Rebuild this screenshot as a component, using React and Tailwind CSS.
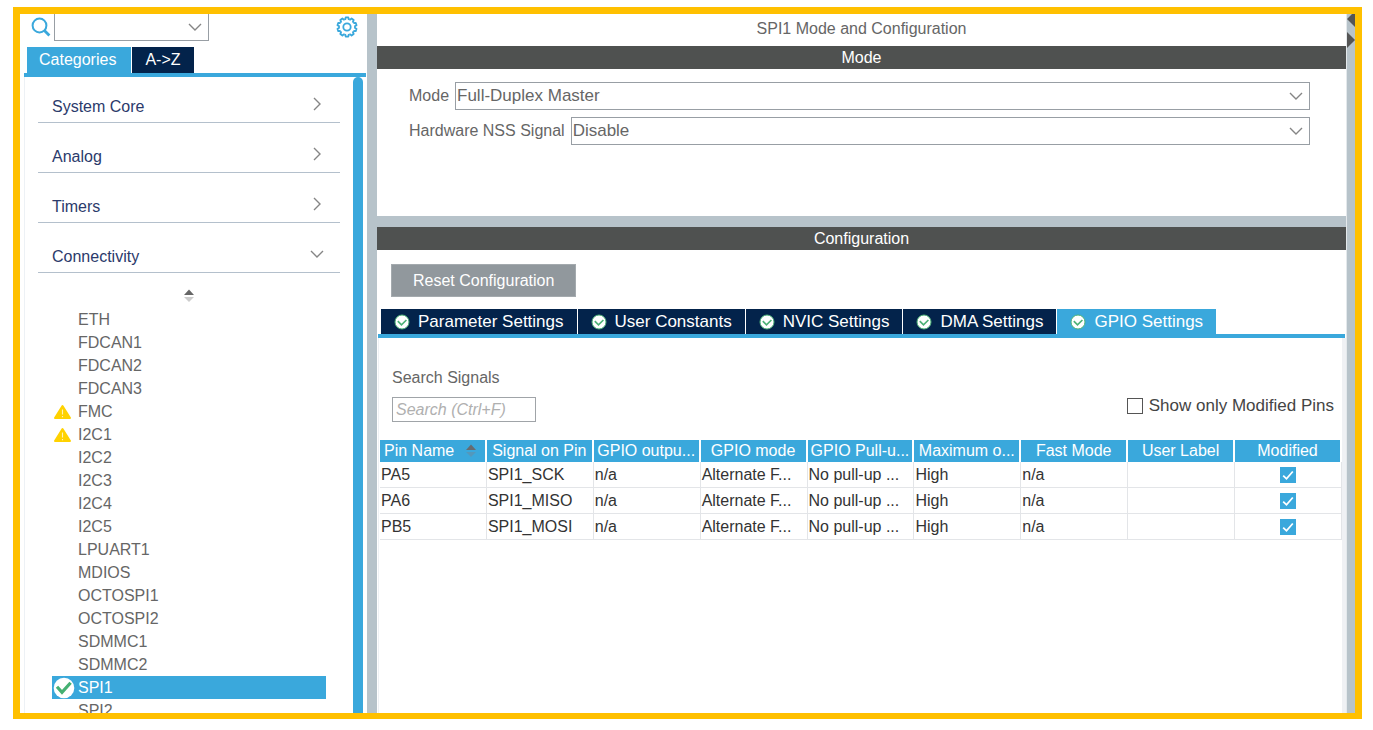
import { useState } from 'react'

const categories = [
  { name: 'System Core', open: false },
  { name: 'Analog', open: false },
  { name: 'Timers', open: false },
  { name: 'Connectivity', open: true },
]

const peripherals = [
  { name: 'ETH' },
  { name: 'FDCAN1' },
  { name: 'FDCAN2' },
  { name: 'FDCAN3' },
  { name: 'FMC', status: 'warning' },
  { name: 'I2C1', status: 'warning' },
  { name: 'I2C2' },
  { name: 'I2C3' },
  { name: 'I2C4' },
  { name: 'I2C5' },
  { name: 'LPUART1' },
  { name: 'MDIOS' },
  { name: 'OCTOSPI1' },
  { name: 'OCTOSPI2' },
  { name: 'SDMMC1' },
  { name: 'SDMMC2' },
  { name: 'SPI1', status: 'ok' },
  { name: 'SPI2' },
]

const settingTabs = [
  'Parameter Settings',
  'User Constants',
  'NVIC Settings',
  'DMA Settings',
  'GPIO Settings',
]

const columns = [
  'Pin Name',
  'Signal on Pin',
  'GPIO outpu...',
  'GPIO mode',
  'GPIO Pull-u...',
  'Maximum o...',
  'Fast Mode',
  'User Label',
  'Modified',
]

const pins = [
  ['PA5', 'SPI1_SCK', 'n/a', 'Alternate F...', 'No pull-up ...', 'High', 'n/a', ''],
  ['PA6', 'SPI1_MISO', 'n/a', 'Alternate F...', 'No pull-up ...', 'High', 'n/a', ''],
  ['PB5', 'SPI1_MOSI', 'n/a', 'Alternate F...', 'No pull-up ...', 'High', 'n/a', ''],
]

function Chevron({ className = '' }) {
  return (
    <svg
      viewBox="0 0 14 14"
      className={`h-[14px] w-[14px] ${className}`}
      fill="none"
      stroke="#858585"
      strokeWidth="1.4"
      aria-hidden="true"
    >
      <path d="M1 4l6 6 6-6" />
    </svg>
  )
}

function SearchIcon() {
  return (
    <svg viewBox="0 0 20 20" className="h-5 w-5" fill="none" stroke="#3AA8DC" aria-hidden="true">
      <circle cx="8.5" cy="8.5" r="6.9" strokeWidth="2" />
      <path d="M13.4 13.4l5 5" strokeWidth="2.8" />
    </svg>
  )
}

function GearIcon() {
  const teeth = [0, 36, 72, 108, 144, 180, 216, 252, 288, 324]

  return (
    <svg viewBox="0 0 22 22" className="h-[22px] w-[22px]" fill="none" stroke="#3AA8DC" aria-hidden="true">
      {teeth.map((angle) => (
        <path
          key={angle}
          d="M8.4 3.5L9.4 3.1L9.7 1.4H12.3L12.6 3.1L13.6 3.5"
          strokeWidth="1.8"
          strokeLinejoin="round"
          transform={`rotate(${angle} 11 11)`}
        />
      ))}
      <circle cx="11" cy="11" r="3.7" strokeWidth="1.8" />
    </svg>
  )
}

function WarningIcon() {
  return (
    <svg viewBox="0 0 18 16" className="h-4 w-[18px]" aria-hidden="true">
      <path
        d="M9.5 2L17 14H2z"
        fill="#FFD200"
        stroke="#FFD200"
        strokeWidth="2"
        strokeLinejoin="round"
      />
      <path d="M9.5 5.5v5M9.5 12v1.3" stroke="#FFF3B8" strokeWidth="1.1" />
    </svg>
  )
}

function OkIcon() {
  return (
    <svg viewBox="0 0 22 22" className="h-[22px] w-[22px]" aria-hidden="true">
      <circle cx="11" cy="11" r="10.3" fill="#fff" />
      <path d="M4 9.8l5 5.6 8.6-9.6" fill="none" stroke="#45B072" strokeWidth="3.2" />
    </svg>
  )
}

function TabCheckIcon() {
  return (
    <svg viewBox="0 0 16 16" className="h-4 w-4" aria-hidden="true">
      <circle cx="8" cy="8" r="7" fill="#fff" stroke="#4DB277" strokeWidth="1" />
      <path d="M3.8 7.2l3.7 3.6 4.9-4.8" fill="none" stroke="#4DB277" strokeWidth="1.7" />
    </svg>
  )
}

function SortIcon({ upper = '#666', lower = '#CCCCCC' }) {
  return (
    <svg viewBox="0 0 10 14" className="h-[14px] w-[10px]" aria-hidden="true">
      <path d="M5 0.5l5 5.5H0z" fill={upper} />
      <path d="M5 13l5-5H0z" fill={lower} />
    </svg>
  )
}

function SelectField({ id, label, value }) {
  return (
    <div className="flex h-7 items-center gap-1.5">
      <label htmlFor={id} className="whitespace-nowrap">
        {label}
      </label>
      <div className="relative h-full flex-1">
        <select
          id={id}
          className="h-full w-full appearance-none border border-[#989EA4] bg-white pl-px text-[17px] outline-none"
        >
          <option>{value}</option>
        </select>
        <Chevron className="pointer-events-none absolute top-[7px] right-[7px]" />
      </div>
    </div>
  )
}

function SectionHeader({ children }) {
  return <h2 className="h-[23px] bg-[#4F5150] text-center leading-[23px] text-white">{children}</h2>
}

function Sidebar() {
  const [selected, setSelected] = useState('SPI1')

  return (
    <aside className="flex w-[347px] shrink-0 flex-col pr-px pl-1">
      <div className="flex h-[27px] items-start justify-between pr-2 pl-[7px]">
        <div className="flex items-start">
          <div className="pt-[3px]">
            <SearchIcon />
          </div>
          <div className="relative ml-[3px] h-[27px] w-[155px]">
            <select
              aria-label="Search peripheral"
              className="h-full w-full appearance-none border border-t-0 border-[#989EA4] bg-white outline-none"
            />
            <Chevron className="pointer-events-none absolute top-[6px] right-[7px]" />
          </div>
        </div>
        <button type="button" aria-label="Settings" className="pt-[2px]">
          <GearIcon />
        </button>
      </div>

      <div className="mt-1.5 flex h-[26px] gap-px pl-[3px] text-white" role="tablist">
        <button type="button" role="tab" aria-selected="true" className="bg-[#3AA8DC] pr-[15px] pl-3">
          Categories
        </button>
        <button type="button" role="tab" aria-selected="false" className="bg-[#03234B] px-[13px]">
          {'A->Z'}
        </button>
      </div>

      <div className="flex min-h-0 flex-1 border-t-4 border-[#3AA8DC]">
        <div className="flex min-w-0 flex-1 flex-col overflow-hidden border-l border-[#EDF1F5] pt-3 pr-[13px] pl-[13px]">
          <div className="flex flex-col gap-4">
            {categories.map((category) => (
              <button
                key={category.name}
                type="button"
                aria-expanded={category.open}
                className="flex h-[34px] w-full items-center justify-between border-b border-[#B4C0CC] pr-4 pl-[14px] text-left text-[#2B3A6B]"
              >
                <span className="pt-0.5">{category.name}</span>
                <Chevron className={category.open ? 'mb-1' : 'mb-1 -rotate-90'} />
              </button>
            ))}
          </div>

          <div className="mt-4 flex h-[19px] shrink-0 justify-center">
            <SortIcon />
          </div>

          <ul className="mr-[14px] ml-[14px] text-[#666]">
            {peripherals.map((item) => (
              <li key={item.name}>
                <button
                  type="button"
                  onClick={() => setSelected(item.name)}
                  className={`flex h-[23px] w-full items-center text-left leading-[23px] ${
                    selected === item.name ? 'bg-[#3AA8DC] text-white' : ''
                  }`}
                >
                  <span className="flex w-[26px] shrink-0 pl-px">
                    {item.status === 'warning' && <WarningIcon />}
                    {item.status === 'ok' && <OkIcon />}
                  </span>
                  {item.name}
                </button>
              </li>
            ))}
          </ul>
        </div>
        <div className="mr-[3px] w-[10px] rounded-t-full bg-[#3AA8DC]" />
      </div>
    </aside>
  )
}

function PinTable() {
  return (
    <table className="mt-[18px] w-full table-fixed border-separate border-spacing-0 text-[#333]">
      <thead>
        <tr className="text-white">
          {columns.map((column, index) => (
            <th
              key={column}
              scope="col"
              className="h-[22px] overflow-hidden border-r-2 border-white bg-[#3AA8DC] p-0 leading-[22px] font-normal whitespace-nowrap"
            >
              {index === 0 ? (
                <div className="flex items-center gap-3 pl-1">
                  {column}
                  <SortIcon upper="#666B70" lower="#5498BB" />
                </div>
              ) : (
                column
              )}
            </th>
          ))}
        </tr>
      </thead>
      <tbody>
        {pins.map((row) => (
          <tr key={row[0]}>
            {row.map((cell, index) => (
              <td
                key={columns[index]}
                className="h-[26px] overflow-hidden border-r border-b border-[#E3E5E8] p-0 pl-px leading-[25px] whitespace-nowrap"
              >
                {cell}
              </td>
            ))}
            <td className="h-[26px] border-r border-b border-[#E3E5E8] p-0">
              <div className="grid place-items-center">
                <input
                  type="checkbox"
                  defaultChecked
                  aria-label={`${row[0]} modified`}
                  className="peer col-start-1 row-start-1 h-4 w-4 appearance-none border border-[#3AA8DC] checked:bg-[#3AA8DC]"
                />
                <svg
                  viewBox="0 0 16 16"
                  className="pointer-events-none invisible col-start-1 row-start-1 h-4 w-4 peer-checked:visible"
                  fill="none"
                  stroke="#fff"
                  strokeWidth="1.8"
                  aria-hidden="true"
                >
                  <path d="M3.2 8.6l3.3 3.2 6.3-7.3" />
                </svg>
              </div>
            </td>
          </tr>
        ))}
      </tbody>
    </table>
  )
}

function ConfigurationPanel() {
  const [activeTab, setActiveTab] = useState('GPIO Settings')

  return (
    <section className="flex min-h-0 flex-1 flex-col bg-white">
      <SectionHeader>Configuration</SectionHeader>

      <div className="px-[14px] pt-[14px] pb-3">
        <button type="button" className="h-[33px] border border-[#A4AAAE] bg-[#91989D] px-[21px] text-white">
          Reset Configuration
        </button>
      </div>

      <div className="mr-px ml-px flex h-[29px] shrink-0 gap-px border-b-4 border-[#3AA8DC] pl-[3px]" role="tablist">
        {settingTabs.map((tab) => (
          <button
            key={tab}
            type="button"
            role="tab"
            aria-selected={activeTab === tab}
            onClick={() => setActiveTab(tab)}
            className={`flex items-center gap-2 px-[13px] text-[17px] whitespace-nowrap text-white ${
              activeTab === tab ? 'bg-[#3AA8DC]' : 'bg-[#03234B]'
            }`}
          >
            <TabCheckIcon />
            {tab}
          </button>
        ))}
      </div>

      <div className="ml-px min-h-0 flex-1 border-r-4 border-l border-[#EFF1F4] pt-7 pl-px">
        <div className="flex items-end justify-between pr-2 pl-3">
          <div className="flex flex-col">
            <label htmlFor="signal-search" className="leading-6 text-[#666]">
              Search Signals
            </label>
            <input
              id="signal-search"
              type="text"
              placeholder="Search (Ctrl+F)"
              className="mt-[7px] h-[25px] w-36 border border-[#A0A4A8] px-[3px] italic outline-none placeholder:text-[#B0B0B0]"
            />
          </div>
          <label className="mb-1 flex items-center gap-1.5 text-[17px] leading-6 text-[#444]">
            <input type="checkbox" className="h-4 w-4 appearance-none border border-[#555] checked:bg-[#3AA8DC]" />
            Show only Modified Pins
          </label>
        </div>
        <PinTable />
      </div>
    </section>
  )
}

export default function App() {
  return (
    <div className="h-screen bg-white pt-[7px] pr-[11px] pb-[11px] pl-[13px] font-['Liberation_Sans',Arial,sans-serif] text-base">
      <div className="flex h-full overflow-hidden border-[7px] border-b-[6px] border-[#FFC000]">
        <Sidebar />

        <div className="w-[10px] shrink-0 bg-[#B7C3CA]" />

        <main className="flex min-w-0 flex-1 flex-col bg-[#B7C3CA]">
          <h1 className="h-8 shrink-0 bg-white text-center leading-[30px] text-[#666]">
            SPI1 Mode and Configuration
          </h1>
          <section className="mb-[11px] h-[170px] shrink-0 bg-white">
            <SectionHeader>Mode</SectionHeader>
            <div className="flex flex-col gap-[7px] pt-[13px] pr-9 pl-8 text-[#666]">
              <SelectField id="mode" label="Mode" value="Full-Duplex Master" />
              <SelectField id="nss" label="Hardware NSS Signal" value="Disable" />
            </div>
          </section>
          <ConfigurationPanel />
        </main>

        <div className="w-[9px] shrink-0 border-l border-[#E4E9EC] bg-[#B7C3CA]">
          <svg viewBox="0 0 8 36" className="h-9 w-2" fill="#555" aria-hidden="true">
            <path d="M0 5l8-8v16zM0 18l8 8-8 8z" />
          </svg>
        </div>
      </div>
    </div>
  )
}
